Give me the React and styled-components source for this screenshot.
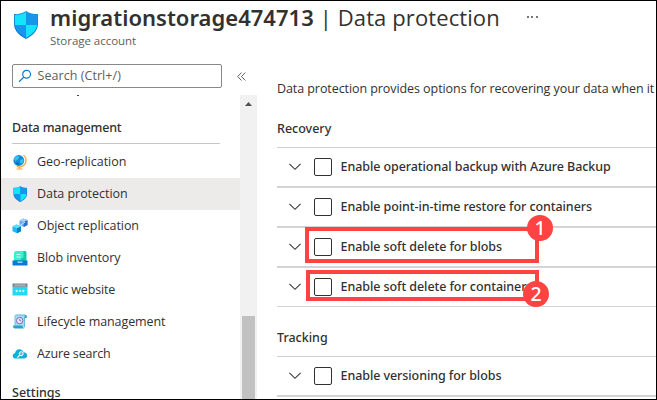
import React from "react";
import styled, { createGlobalStyle } from "styled-components";

const GlobalStyle = createGlobalStyle`
  html, body { margin: 0; padding: 0; background: #fff; overflow: hidden; }
  *, *::before, *::after { box-sizing: border-box; }
`;

const regular = `"Open Sans", "Noto Sans", sans-serif`;
const strong = `"Noto Sans", "Open Sans", sans-serif`;

const Frame = styled.div`
  position: relative;
  display: flex;
  flex-direction: column;
  width: 657px;
  height: 400px;
  border: 1px solid #000;
  background: #fff;
  color: #323130;
  font: 400 12.5px/18px ${regular};
  overflow: hidden;
  white-space: nowrap;
`;

const Header = styled.header`
  display: flex;
  flex: none;
  height: 63px;
  padding-left: 13px;
`;

const HeaderIcon = styled.div`
  width: 36px;
  padding-top: 10px;
  svg { display: block; }
`;

const Heading = styled.h1`
  display: flex;
  margin: 0;
  height: 32px;
  font: 600 22px/32px ${strong};
  letter-spacing: 0.02px;
`;

const Blade = styled.span`
  margin-left: 6px;
  font: 400 22px/32px ${regular};
  letter-spacing: 0.1px;
`;

const More = styled.span`
  display: flex;
  gap: 2.6px;
  margin: 15px 0 0 27px;
  i { width: 2px; height: 2px; background: #77757a; }
`;

const Kind = styled.div`
  font-size: 11.5px;
  line-height: 16px;
  color: #605e5c;
  letter-spacing: -0.03px;
`;

const Body = styled.div`
  display: flex;
  flex: 1;
  min-height: 0;
`;

const Sidebar = styled.aside`
  display: flex;
  flex-direction: column;
  flex: none;
  width: 256px;
`;

const SearchRow = styled.div`
  display: flex;
  align-items: center;
  flex: none;
  height: 24px;
  padding-left: 11px;
`;

const SearchBox = styled.div`
  display: flex;
  align-items: center;
  width: 210px;
  height: 24px;
  padding-left: 5px;
  border: 1px solid #8a8886;
  border-radius: 2px;
  color: #605e5c;
  letter-spacing: 0.06px;
  svg { margin-right: 5.5px; }
`;

const Collapse = styled.svg`
  margin-left: 14.5px;
`;

const MenuArea = styled.div`
  display: flex;
  flex: 1;
  min-height: 0;
  padding-top: 7px;
`;

const Menu = styled.nav`
  width: 239px;
  overflow: hidden;
`;

const ClippedItem = styled.div`
  width: 2px;
  height: 1px;
  margin-left: 76px;
  background: #4a4846;
`;

const GroupTitle = styled.h2`
  margin: ${(p) => (p.$last ? "13px 0 0 11px" : "22px 0 0 11px")};
  font: 500 12.5px/20px ${strong};
  letter-spacing: ${(p) => (p.$last ? "0" : "-0.17px")};
  width: 208px;
`;

const MenuRule = styled.div`
  height: 1px;
  width: 208px;
  margin: 5px 0 2px 11px;
  background: #c8c6c4;
`;

const MenuItem = styled.div`
  display: flex;
  align-items: center;
  height: 32px;
  padding-left: 11px;
  background: ${(p) => (p.$active ? "#edebe9" : "transparent")};
  letter-spacing: ${(p) => p.$track || 0}px;
  svg { flex: none; margin-right: 9px; }
`;

const Scrollbar = styled.div`
  width: 17px;
  background: #f1f1f1;
  display: flex;
  flex-direction: column;
  align-items: center;
  svg { margin-top: 7px; flex: none; }
`;

const Thumb = styled.div`
  width: 13px;
  flex: 1;
  margin-top: 210px;
  background: #c1c1c1;
`;

const Main = styled.main`
  flex: 1;
  min-width: 0;
  padding: 16px 0 0 20px;
`;

const Intro = styled.p`
  margin: 0;
  height: 18px;
  letter-spacing: -0.075px;
`;

const Section = styled.section`
  padding-top: ${(p) => p.$top}px;
`;

const SectionTitle = styled.h3`
  margin: 0;
  height: 29px;
  padding-bottom: 9px;
  border-bottom: 1px solid #d2d0ce;
  font: 500 12.5px/20px ${strong};
`;

const Option = styled.div`
  display: flex;
  align-items: center;
  height: ${(p) => (p.$last ? 39 : 40)}px;
  padding-left: 12px;
  border-bottom: ${(p) => (p.$last ? 1 : 2)}px solid #d4d4d4;
  font: 500 12.5px/20px ${strong};
  letter-spacing: -0.075px;
`;

const Checkbox = styled.span`
  width: 18px;
  height: 18px;
  margin: 0 8.5px 0 13px;
  border: 1px solid #323130;
  border-radius: 2px;
`;

const Callout = styled.div`
  position: absolute;
  left: ${(p) => p.$x}px;
  top: ${(p) => p.$y}px;
  width: ${(p) => p.$w}px;
  height: ${(p) => p.$h}px;
  border: 4px solid #ff4343;
`;

const Badge = styled.div`
  position: absolute;
  left: ${(p) => p.$x}px;
  top: ${(p) => p.$y}px;
  width: 26px;
  height: 26px;
  border-radius: 50%;
  background: #ff4343;
  color: #fff;
  text-align: center;
  font: 500 19.5px/25px "Noto Sans", sans-serif;
`;

const Shield = ({ w, h }) => (
  <svg width={w} height={h} viewBox="0 0 24 28">
    <defs>
      <clipPath id={"shield" + w}>
        <path d="M12 1C8.5 3.4 4.5 4 1 4v9c0 7 6 11 11 14 5-3 11-7 11-14V4C19.5 4 15.5 3.4 12 1Z" />
      </clipPath>
      <linearGradient id={"rim" + w} x2="0" y2="1">
        <stop stopColor="#1a96e0" />
        <stop offset="1" stopColor="#0e6fcb" />
      </linearGradient>
    </defs>
    <path d="M12 0C8.5 2.6 4.5 3 0 3v10c0 7.5 6.500 12 12 15 5.500-3 12-7.500 12-15V3C19.500 3 15.500 2.600 12 0Z" fill={`url(#rim${w})`} />
    <g clipPath={`url(#shield${w})`}>
      <path fill="#14e4fb" d="M0 0h12v14H0zM12 14h12v14H12z" />
      <path fill="#1595eb" d="M12 0h12v14H12zM0 14h12v14H0z" />
    </g>
  </svg>
);

const SearchIcon = () => (
  <svg width="14" height="14" viewBox="0 0 14 14" fill="none" stroke="#0f7bd0" strokeWidth="1.2">
    <circle cx="8.6" cy="5.300" r="3.900" />
    <path d="M5.700 8.200 1 12.800" />
  </svg>
);

const Globe = () => (
  <svg width="16" height="16" viewBox="0 0 16 16">
    <path d="M11.500 1.200a6.600 6.600 0 0 1-6.800 11.200" fill="none" stroke="#f7a64b" strokeWidth="1.300" />
    <path d="M7.500 13v1.500M4.500 15h6" stroke="#f7a64b" strokeWidth="1.200" />
    <circle cx="6.800" cy="6.500" r="5.400" fill="#1489dd" />
    <path d="M3 3.200 6 1.800l1.500 1.400-1.700 2.200L3.500 7 2 5.500zM8 6l2.500-1 1.300 1.500-1.500 3.200-2-.7z" fill="#32c5e8" />
    <path d="M4 8.500 7 9l-.6 2.300-1.900-.8z" fill="#0c62bd" />
  </svg>
);

const Cubes = () => (
  <svg width="16" height="16" viewBox="0 0 16 16">
    <path fill="#6aa7f0" d="m7.500 2.500 4-2 4 1.500v5l-3.500 2-4.500-2z" />
    <path fill="#2b70cf" d="m11.500 4 4-2v5l-3.700 2z" />
    <path fill="#a8cdfa" d="m7.500 2.500 4-2 4 1.500-4 2z" />
    <path d="M7.500 8 13 4" stroke="#d9edff" strokeWidth="1" />
    <path fill="#25b8ee" d="m.5 8.500 4-2L9 8.200v5l-4 2-4.500-2z" />
    <path fill="#0a7fc9" d="m5 10.200 4-2v5l-4 2z" />
    <path fill="#62dcfa" d="m.5 8.500 4-2L9 8.200l-4 2z" />
  </svg>
);

const Inventory = () => (
  <svg width="16" height="16" viewBox="0 0 16 16">
    <path fill="#12cba9" d="M4 1h9.500l1 1v9H2V3z" />
    <path fill="#3cf0cf" d="M4 1h7.500v6L8 10H2V3z" />
    <path d="M4.500 4.500h4M4.500 7h4" stroke="#c5fff2" strokeWidth="1" />
    <path fill="#0d78d6" d="M.5 10.500h15v5H.5z" />
    <path fill="#b9e7ff" d="M5.500 11.500h5v1.300h-5z" />
  </svg>
);

const Website = () => (
  <svg width="16" height="16" viewBox="0 0 16 16">
    <path fill="#25d7f3" d="M.5 4.500h15v9H.5z" />
    <path fill="#7c7f83" d="M.5 1.500h15v3.200H.5z" />
    <path fill="#c9cccf" d="M2.500 2.600h11v1H2.500z" />
    <path d="M3.500 9h2.400M6.800 9h2.400M10.100 9h2.400M4.700 7.800v2.400M8 7.800v2.400M11.300 7.800v2.400" stroke="#e8fdff" strokeWidth="1" />
  </svg>
);

const Lifecycle = () => (
  <svg width="16" height="16" viewBox="0 0 16 16">
    <path fill="#a5dced" d="M3.500 1h10.300L12.500 3v11H3z" />
    <path fill="#27a5c8" d="M13 .800a1.800 1.800 0 0 1 1.800 1.800V4H12.600V2zM1 11.500h9.500c0 1.500.5 2.500 1.500 3H3c-1.500 0-2-1.200-2-3Z" />
    <path d="M3 11.500V2.500c0-1 .4-1.600 1.200-1.600H13M12.500 3v10" fill="none" stroke="#47acd0" strokeWidth=".8" />
    <circle cx="7.700" cy="6.600" r="3.200" fill="#ece9fa" stroke="#8168bd" />
    <path d="M7.700 4.800v2h1.600" fill="none" stroke="#705aaf" strokeWidth=".8" />
  </svg>
);

const CloudSearch = () => (
  <svg width="16" height="16" viewBox="0 0 16 16">
    <path fill="#12aed5" d="M3.600 12.500C1.900 12.500.7 11.400.7 9.900c0-1.400 1-2.400 2.300-2.600C3.200 5 4.900 3.300 7.300 3.300c2 0 3.600 1.100 4.200 2.900 2.200.1 3.700 1.400 3.700 3.200 0 1.800-1.400 3.100-3.300 3.100Z" />
    <circle cx="9.200" cy="7.700" r="2" fill="#45c7e3" stroke="#fff" />
    <path d="m7.700 9.200-2.500 2.400" stroke="#fff" strokeWidth="1.200" />
  </svg>
);

const Chevron = () => (
  <svg width="12" height="8" viewBox="0 0 12 8" fill="none" stroke="#3b3a39" strokeWidth="1.150">
    <path d="m.4.800 5.600 5.500L11.600.8" />
  </svg>
);

const menu = [
  ["Geo-replication", Globe, 0],
  ["Data protection", () => <Shield w={14.5} h={16} />, -0.04, true],
  ["Object replication", Cubes, -0.06],
  ["Blob inventory", Inventory, -0.1],
  ["Static website", Website, -0.13],
  ["Lifecycle management", Lifecycle, -0.09],
  ["Azure search", CloudSearch, -0.16],
];

const recovery = [
  "Enable operational backup with Azure Backup",
  "Enable point-in-time restore for containers",
  "Enable soft delete for blobs",
  "Enable soft delete for containers",
];

const IconSlot = styled.span`
  display: flex;
  justify-content: center;
  flex: none;
  width: 16px;
  margin-right: 9px;
  svg { margin: 0; }
`;

const OptionRow = ({ label, last }) => (
  <Option $last={last}>
    <Chevron />
    <Checkbox />
    {label}
  </Option>
);

export default function App() {
  return (
    <Frame>
      <GlobalStyle />
      <Header>
        <HeaderIcon>
          <Shield w={24} h={28} />
        </HeaderIcon>
        <div>
          <Heading>
            migrationstorage474713
            <Blade>| Data protection</Blade>
            <More><i /><i /><i /></More>
          </Heading>
          <Kind>Storage account</Kind>
        </div>
      </Header>
      <Body>
        <Sidebar>
          <SearchRow>
            <SearchBox>
              <SearchIcon />
              Search (Ctrl+/)
            </SearchBox>
            <Collapse width="9" height="9" viewBox="0 0 9 9" fill="none" stroke="#605e5c">
              <path d="M4.500.5.700 4.500l3.800 4M8.300.5 4.500 4.500l3.800 4" />
            </Collapse>
          </SearchRow>
          <MenuArea>
            <Menu>
              <ClippedItem />
              <GroupTitle>Data management</GroupTitle>
              <MenuRule />
              {menu.map(([label, Icon, track, active]) => (
                <MenuItem key={label} $track={track} $active={active}>
                  <IconSlot as="span"><Icon /></IconSlot>
                  {label}
                </MenuItem>
              ))}
              <GroupTitle $last>Settings</GroupTitle>
            </Menu>
            <Scrollbar>
              <svg width="7" height="4" viewBox="0 0 7 4"><path fill="#505050" d="M0 4 3.500 0 7 4Z" /></svg>
              <Thumb />
            </Scrollbar>
          </MenuArea>
        </Sidebar>
        <Main>
          <Intro>Data protection provides options for recovering your data when it</Intro>
          <Section $top={21}>
            <SectionTitle>Recovery</SectionTitle>
            {recovery.map((label, i) => (
              <OptionRow key={label} label={label} last={i === recovery.length - 1} />
            ))}
          </Section>
          <Section $top={21}>
            <SectionTitle>Tracking</SectionTitle>
            <OptionRow label="Enable versioning for blobs" />
          </Section>
        </Main>
      </Body>
      <Callout $x={304} $y={226} $w={234} $h={36} />
      <Callout $x={305} $y={269} $w={233} $h={31} />
      <Badge $x={526} $y={214}>1</Badge>
      <Badge $x={522} $y={280}>2</Badge>
    </Frame>
  );
}
